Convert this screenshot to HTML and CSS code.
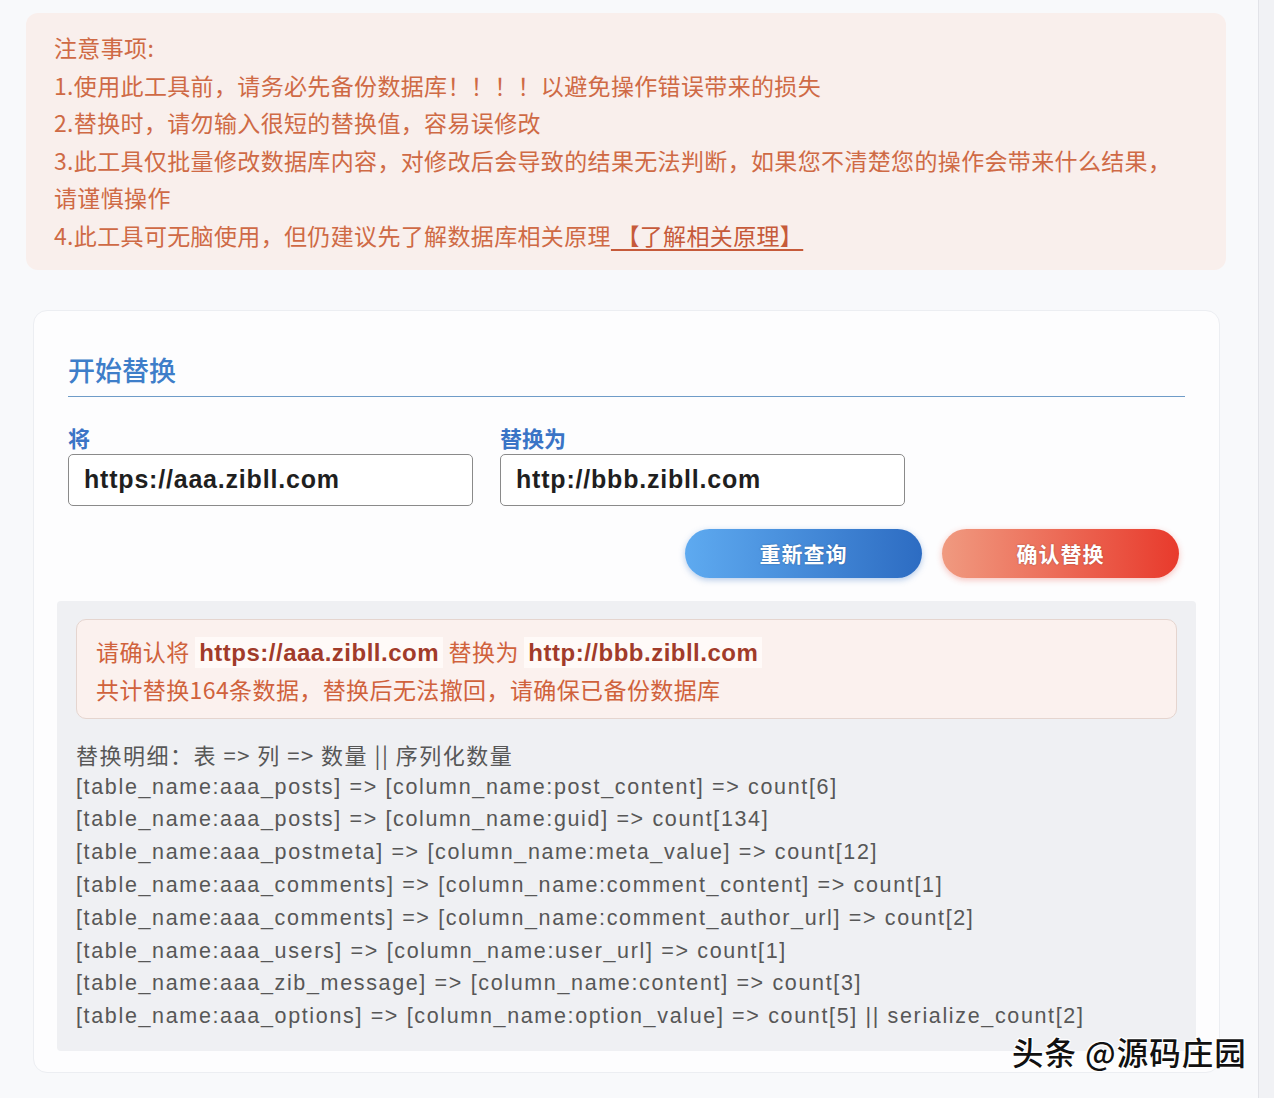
FILE: index.html
```html
<!DOCTYPE html>
<html lang="zh-CN">
<head>
<meta charset="utf-8">
<title>批量替换</title>
<link rel="stylesheet" href="styles.css">
</head>
<body>
<div class="page">
  <main class="main">
    <section class="notice">
      <div>注意事项:</div>
      <div>1.使用此工具前，请务必先备份数据库！！！！以避免操作错误带来的损失</div>
      <div>2.替换时，请勿输入很短的替换值，容易误修改</div>
      <div>3.此工具仅批量修改数据库内容，对修改后会导致的结果无法判断，如果您不清楚您的操作会带来什么结果，<br>请谨慎操作</div>
      <div>4.此工具可无脑使用，但仍建议先了解数据库相关原理<a class="notice-link" href="#">&nbsp;【了解相关原理】</a></div>
    </section>

    <section class="card">
      <h2 class="card-title">开始替换</h2>
      <div class="fields">
        <div class="field">
          <label class="field-label">将</label>
          <input class="field-input" type="text" value="https://aaa.zibll.com" readonly>
        </div>
        <div class="field">
          <label class="field-label">替换为</label>
          <input class="field-input" type="text" value="http://bbb.zibll.com" readonly>
        </div>
      </div>
      <div class="actions">
        <button class="btn btn-blue" type="button">重新查询</button>
        <button class="btn btn-red" type="button">确认替换</button>
      </div>
      <div class="result">
        <div class="alert">
          <div>请确认将 <code class="url">https://aaa.zibll.com</code> 替换为 <code class="url">http://bbb.zibll.com</code></div>
          <div>共计替换164条数据，替换后无法撤回，请确保已备份数据库</div>
        </div>
        <div class="details">
          <div class="details-head">替换明细：表 =&gt; 列 =&gt; 数量 || 序列化数量</div>
          <div>[table_name:aaa_posts] =&gt; [column_name:post_content] =&gt; count[6]</div>
          <div>[table_name:aaa_posts] =&gt; [column_name:guid] =&gt; count[134]</div>
          <div>[table_name:aaa_postmeta] =&gt; [column_name:meta_value] =&gt; count[12]</div>
          <div>[table_name:aaa_comments] =&gt; [column_name:comment_content] =&gt; count[1]</div>
          <div>[table_name:aaa_comments] =&gt; [column_name:comment_author_url] =&gt; count[2]</div>
          <div>[table_name:aaa_users] =&gt; [column_name:user_url] =&gt; count[1]</div>
          <div>[table_name:aaa_zib_message] =&gt; [column_name:content] =&gt; count[3]</div>
          <div>[table_name:aaa_options] =&gt; [column_name:option_value] =&gt; count[5] || serialize_count[2]</div>
        </div>
      </div>
    </section>
  </main>
  <div class="scrollbar"></div>
</div>
<div class="watermark">头条 @源码庄园</div>
</body>
</html>
```
FILE: styles.css
```css
html, body {
  margin: 0;
  padding: 0;
}

body {
  background: #f8f9fb;
  font-family: "Noto Sans CJK SC", "Noto Sans", sans-serif;
  position: relative;
}

.page {
  display: flex;
  min-height: 1098px;
}

.main {
  flex: 0 0 1258px;
  box-sizing: border-box;
  padding: 13px 0 0 26px;
}

.scrollbar {
  flex: 1 1 auto;
  background: #f1f2f5;
  border-left: 1px solid #e2e3e8;
}

/* notice */
.notice {
  width: 1200px;
  box-sizing: border-box;
  background: #f9efec;
  border-radius: 12px;
  padding: 16px 28px 15px;
  color: #cf6a45;
  font-size: 23px;
  line-height: 37.6px;
  letter-spacing: 0.35px;
}

.notice-link {
  color: #c65a3a;
  text-decoration: underline;
  text-underline-offset: 4px;
}

/* card */
.card {
  margin: 40px 0 0 7px;
  width: 1187px;
  box-sizing: border-box;
  background: #fdfdfe;
  border: 1px solid #eceef2;
  border-radius: 14px;
  padding: 41px 34px 21px;
}

.card-title {
  margin: 0;
  font-size: 27px;
  line-height: 36px;
  font-weight: 500;
  color: #3e7ec9;
  padding-bottom: 8px;
  border-bottom: 1.5px solid #6f9cc8;
}

.fields {
  display: flex;
  gap: 27px;
  margin-top: 28px;
}

.field {
  display: flex;
  flex-direction: column;
  gap: 5px;
}

.field-label {
  font-size: 22px;
  line-height: 24px;
  font-weight: 700;
  color: #3a74c6;
}

.field-input {
  width: 405px;
  height: 52px;
  box-sizing: border-box;
  border: 1px solid #8a8a8a;
  border-radius: 5px;
  padding: 0 15px;
  background: #ffffff;
  font-family: "Liberation Sans", Arial, sans-serif;
  font-weight: 700;
  font-size: 25px;
  letter-spacing: 0.8px;
  color: #1f1f1f;
  outline: none;
}

.actions {
  display: flex;
  justify-content: flex-end;
  gap: 20px;
  margin-top: 23px;
  padding-right: 6px;
}

.btn {
  width: 237px;
  height: 49px;
  border: none;
  border-radius: 25px;
  color: #ffffff;
  font-family: "Noto Sans CJK SC", sans-serif;
  font-size: 21px;
  font-weight: 700;
  letter-spacing: 1px;
  text-shadow: 0 0 2px rgba(0, 0, 0, 0.3);
  cursor: pointer;
}

.btn-blue {
  background: linear-gradient(90deg, #5eaaf0, #2d6cc2);
  box-shadow: 0 2px 6px rgba(46, 108, 192, 0.35);
}

.btn-red {
  background: linear-gradient(90deg, #f09a80, #e83a2c);
  box-shadow: 0 2px 6px rgba(232, 58, 44, 0.3);
}

/* result */
.result {
  margin: 23px -11px 0;
  background: #eff0f3;
  border-radius: 4px;
  padding: 18px 19px 18px;
}

.alert {
  background: #fbf1ee;
  border: 1px solid #e5d5cf;
  border-radius: 10px;
  padding: 13px 19px 11px;
  font-size: 23px;
  line-height: 36px;
  letter-spacing: 0.4px;
  color: #d0623c;
}

.url {
  font-family: "Liberation Sans", Arial, sans-serif;
  font-weight: 700;
  font-size: 24px;
  letter-spacing: 0.5px;
  color: #a13b2a;
  background: #fffaf8;
  padding: 2px 4px;
}

.details {
  margin-top: 18px;
  color: #575757;
  font-family: "Liberation Sans", "Noto Sans CJK SC", sans-serif;
  font-size: 21.5px;
  letter-spacing: 1.65px;
  line-height: 32.8px;
}

.details-head {
  font-family: "Noto Sans CJK SC", sans-serif;
  font-size: 22px;
  letter-spacing: 1.5px;
  line-height: 34px;
}

.watermark {
  position: absolute;
  left: 1012px;
  top: 1030px;
  font-family: "Noto Sans CJK SC", sans-serif;
  font-size: 31.5px;
  line-height: 42px;
  letter-spacing: 1px;
  font-weight: 500;
  color: #111111;
  text-shadow: 1px 1px 0 #fff, -1px -1px 0 #fff, 1px -1px 0 #fff, -1px 1px 0 #fff, 0 0 3px #fff;
}
```
